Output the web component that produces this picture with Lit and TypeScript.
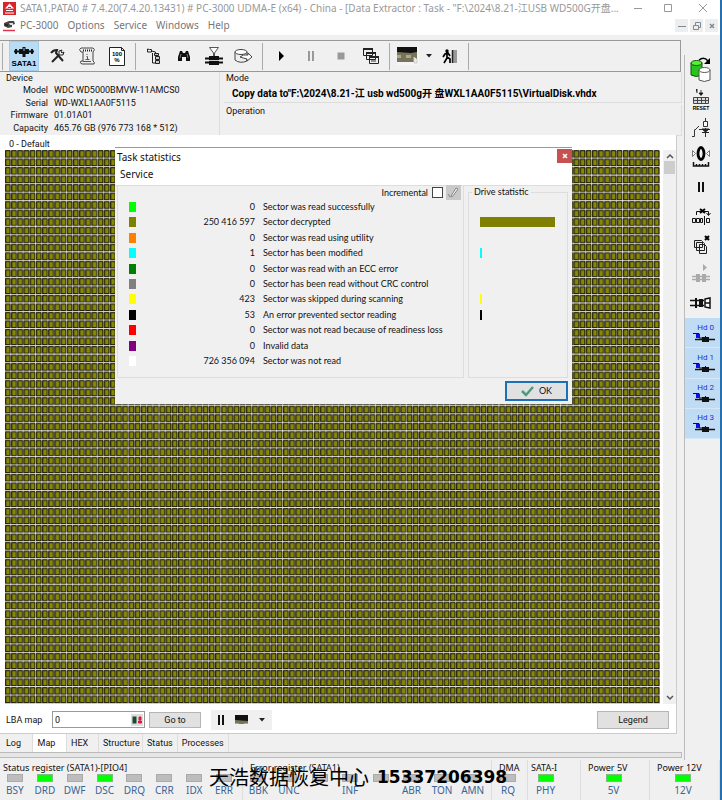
import { LitElement, html, css, svg, nothing } from "lit";
import { customElement, property } from "lit/decorators.js";
import { classMap } from "lit/directives/class-map.js";

const ICONS: Record<string, [number, number, unknown]> = {
  logo: [13, 13, svg`<rect width="13" height="13" fill="#d9252a"/><path d="M6.500 1.500 11 6.500H2z" fill="#fff"/><path d="M6.500 4v2.500M3 8.500h7M2 11h9" stroke="#fff" stroke-width="1.200"/><path d="M5 5.500h3" stroke="#d9252a"/>`],
  app: [13, 12, svg`<path d="M1 3 6 1l5 0 1 3-3 1 0 2-4 1-4-2z" fill="#444"/><path d="M6 3h4v2H7z" fill="#ddd"/><path d="M2 5h3" stroke="#111"/><path d="M0 10.500h12" stroke="#e0354a" stroke-width="1.500"/>`],
  port: [26, 24, svg`<path d="M3 7.500h20M5 5v5M21 5v5" stroke="#111" stroke-width="2"/><path d="M8 5h10v5H8z" fill="#111"/><path d="M13 3v10" stroke="#111" stroke-width="3"/><path d="M13 4v3" stroke="#9fc6ea"/><text x="13" y="21.500" text-anchor="middle" class="port">SATA1</text>`],
  tools: [16, 16, svg`<path d="M2 5q2-3 6-3l-1 3 7 8" stroke="#222" stroke-width="2" fill="none"/><path d="M3 14l7-7" stroke="#222" stroke-width="2"/><path d="M10 3v4h4l1-3-2 1-1-1 1-2z" fill="#eee" stroke="#222"/>`],
  script: [18, 20, svg`<path d="M3 2h12q3 1 0 4v9q2 1 1 3H4q-3-1-1-3h2V6H3Q0 3 3 2z" fill="#eee" stroke="#444"/><path d="M5 4.500h9" stroke="#222" stroke-width="2" stroke-dasharray="1 1"/><path d="M9 8v1M8.500 10.500h1v3M7.500 13.500h4M5 15.500h8" stroke="#555" fill="none"/>`],
  percent: [16, 20, svg`<path d="M.5 1.500h12l3 3v15H.5z" fill="#fff" stroke="#222"/><path d="M12.500 1.500v3h3" fill="none" stroke="#222"/><text x="8" y="10" text-anchor="middle" class="tiny">100</text><text x="8" y="16" text-anchor="middle" class="tiny">%</text>`],
  tree: [16, 18, svg`<path d="M1.500 2v3h4V2.500h-2zM5.500 4l4 1v3M6.500 6v10h4" fill="none" stroke="#222"/><path d="M8.500 6.500h4v2h-4zM9.500 9.500h4v3h-4zM9.500 13.500h4v3h-4z" fill="#ccc" stroke="#222"/>`],
  find: [14, 14, svg`<path d="M3 2h2l1 2h2l1-2h2l2 6v4H9V8H5v4H1V8z" fill="#111"/><path d="M4 5l-1 4M10 5l1 4" stroke="#777"/>`],
  filter: [18, 20, svg`<path d="M4.500 1.500h9L9.500 7v3h-1V7z" fill="#fff" stroke="#555"/><path d="M0 12.500h18M0 16.500h18" stroke="#111" stroke-width="2"/><path d="M4 10h10v9H4z" fill="#111"/><path d="M4 14.500h10" stroke="#ccc"/>`],
  disk: [20, 16, svg`<path d="M1 4v8q5 4 12 1V4z" fill="#eee" stroke="#444"/><ellipse cx="7" cy="4" rx="6" ry="2.500" fill="#fff" stroke="#444"/><path d="M6 9q3-3 8-2V5l4 4-5 4v-2q-4-1-7-2z" fill="#fff" stroke="#444"/>`],
  play: [8, 12, svg`<path d="M2 1 7 6 2 11z" fill="#000"/>`],
  pause: [8, 10, svg`<path d="M2 0v10M6 0v10" stroke="currentColor" stroke-width="2"/>`],
  stop: [8, 8, svg`<rect x="0.500" y="0.500" width="7" height="7" fill="#999"/>`],
  windows: [18, 18, svg`<path d="M1.500 1.500h9v7h-9zM4.500 5.500h9v7h-9zM7.500 9.500h9v7h-9z" fill="#eee" stroke="#222"/><path d="M1 2h10M4 6h10M7 10h10" stroke="#222" stroke-width="2"/><path d="M9 14h5" stroke="#333"/>`],
  photo: [22, 18, svg`<rect width="22" height="18" fill="#f5f5f5"/><rect width="20" height="15" fill="#77745a"/><path d="M0 0h20v5L14 6 0 5z" fill="#11120f"/><path d="M0 8h4v3H0zM9 8h5v3H9z" fill="#aaa98c"/><path d="M17 10v6h3v-4" stroke="#ccc" fill="#eee"/>`],
  caret: [8, 6, svg`<path d="M1 1h6L4 4.500z" fill="#222"/>`],
  exit: [16, 16, svg`<circle cx="5" cy="3" r="1.700" fill="#000"/><path d="M5 4v6l-3 5M5 9l3 2 0 4M1 9l2-3 3-1 2 3" stroke="#000" stroke-width="1.700" fill="none"/><path d="M11 2h4v13h-4z" fill="#999"/><path d="M10.500 2v13" stroke="#222" stroke-width="1.500"/>`],
  copyDisk: [24, 28, svg`<path d="M2 7v12q5 3 11 0V7z" fill="#26c51a" stroke="#174d10"/><ellipse cx="7.500" cy="7" rx="5.500" ry="2.500" fill="#58f037" stroke="#174d10"/><path d="M10 14v10q5 3 11 0V14z" fill="#fff" stroke="#555"/><ellipse cx="15.500" cy="14" rx="5.500" ry="2.500" fill="#fff" stroke="#555"/><path d="M10 4q5-4 9 1" fill="none" stroke="#000" stroke-width="1.500"/><path d="M21 2v6h-6z" fill="#000"/>`],
  reset: [20, 24, svg`<path d="M5 3l1-1v4M10 3v4M8 6h4l-2 2.500z" fill="#111" stroke="#111" stroke-width=".8"/><path d="M2.500 10.500h15v6h-15zM6.500 10v7M10.500 10v7M14.500 10v7M2 13.500h16" fill="#ddd" stroke="#444"/><text x="10" y="23" text-anchor="middle" class="micro">RESET</text>`],
  switch: [20, 20, svg`<path d="M1 18.500h2.500v-7M4 12l4-4M8 11.500h11M14.500 0v5M14.500 10v9" fill="none" stroke="#333"/><path d="M12.500 3.500h4v5h-4z" fill="#fff" stroke="#333"/><path d="M11 11h7l-3.500 3zM11 14.500h7" fill="#222" stroke="#222"/>`],
  gauge: [20, 22, svg`<ellipse cx="10" cy="7.500" rx="3" ry="6" fill="none" stroke="#000" stroke-width="2.800"/><path d="M1.500 4.500v6l3-3zM18.500 4.500v6l-3-3z" fill="#fff" stroke="#777"/><path d="M2.500 16v4h15v-4M5.500 18v2M8.500 18v2M11.500 18v2M14.500 18v2" fill="none" stroke="#111" stroke-width="1.500"/>`],
  skip: [20, 18, svg`<path d="M1.500 11.500h3v4h-3zM5.500 11.500h3v4h-3zM9.500 11.500h2v4h-2zM13.500 9v9M15.500 11.500h3v4h-3z" fill="#eee" stroke="#111"/><path d="M5.500 8V4.500h12V8M15.500 6l2 2.500 2-2.500" fill="none" stroke="#111"/><path d="M9 2l5 4M14 2 9 6" stroke="#000" stroke-width="2"/>`],
  pages: [20, 20, svg`<path d="M3.500 5.500h7l1 1v6h-8zM5.500 7.500h7l1 1v7h-8zM8.500 9.500h5l2 2v7h-7z" fill="#eee" stroke="#222"/><path d="M14 1l4 4M18 1l-4 4" stroke="#000" stroke-width="2"/>`],
  ghost: [20, 20, svg`<path d="M12 0v7l4-3.500z" fill="#aaa"/><path d="M1 12.500h18M1 15.500h18" stroke="#aaa" stroke-width="1.500"/><path d="M5 10h4v8H5zM11 10h4v8h-4z" fill="#aaa"/>`],
  plug: [22, 12, svg`<path d="M0 3.500h14M0 8.500h14" stroke="#111" stroke-width="1.500"/><path d="M5 1h2v10H5zM9 2h4v8H9z" fill="#111"/><path d="M15 2l5-1v10l-5-1zM15 6h5" fill="#fff" stroke="#111" stroke-width="1.500"/>`],
  head: [22, 10, svg`<path d="M0 .5h6V5h3" fill="none" stroke="#111"/><path d="M3 1h4v4H3z" fill="#1010e0"/><path d="M2 6.500h20" stroke="#111" stroke-width="1.500"/><path d="M9 4h3v-1h1v1h3v5H9z" fill="#111"/>`],
  pencil: [15, 15, svg`<rect width="15" height="15" fill="#c9c9c9"/><path d="M5 11l5-8 2 1-5 7-2 1zM2 9l2 3" stroke="#888" fill="#eee"/>`],
  check: [14, 12, svg`<path d="M1 6l4 4 7-8" fill="none" stroke="#4a9c7c" stroke-width="2.500"/>`],
  up: [8, 8, svg`<path d="M1 6l3-3 3 3" fill="none" stroke="#555" stroke-width="1.500"/>`],
  down: [8, 8, svg`<path d="M1 2l3 3 3-3" fill="none" stroke="#555" stroke-width="1.500"/>`],
  min: [10, 10, svg`<path d="M1 5.500h8" stroke="currentColor"/>`],
  max: [10, 10, svg`<path d="M1.500 1.500h7v7h-7z" fill="none" stroke="currentColor"/>`],
  restore: [10, 10, svg`<path d="M1.500 4.500h5v4h-5zM3.500 4V1.500h5v5H7" fill="none" stroke="currentColor"/>`],
  close: [10, 10, svg`<path d="M1 1l8 8M9 1 1 9" stroke="currentColor"/>`],
  closeBold: [8, 8, svg`<path d="M2 2l4 4M6 2 2 6" stroke="currentColor" stroke-width="1.500"/>`],
  hex: [12, 12, svg`<rect width="12" height="12" fill="#ddd"/><path d="M2.500 3.500h2v5h-2z" fill="none" stroke="#174a35" stroke-width="2"/><path d="M8 3h2v3H8zM7.500 7h3v2h-3z" fill="#e01840" stroke="#e01840"/>`],
};

@customElement("ui-icon")
class UiIcon extends LitElement {
  static styles = css`
    :host { display: inline-flex; flex: none; }
    svg { display: block; overflow: visible; }
    .port { font: bold 8px "Liberation Sans", sans-serif; }
    .tiny { font: bold 6px "Liberation Sans", sans-serif; }
    .micro { font: bold 5px "Liberation Sans", sans-serif; }
  `;
  @property() name = "";
  render() {
    const [w, h, body] = ICONS[this.name];
    return html`<svg width=${w} height=${h} viewBox="0 0 ${w} ${h}" aria-hidden="true">${body}</svg>`;
  }
}

@customElement("sector-map")
class SectorMap extends LitElement {
  static styles = css`
    :host { display: block; min-height: 0; }
    svg { display: block; width: 100%; height: 100%; }
  `;
  render() {
    return html`<svg viewBox="0 0 848 715" preserveAspectRatio="none" role="img" aria-label="Sector map">
      <defs>
        <pattern id="cell" width="8" height="11" patternUnits="userSpaceOnUse">
          <rect width="8" height="11" fill="#d8d4d4"></rect>
          <rect y="1" width="8" height="8.600" fill="#8c8480"></rect>
          <rect x="0.200" y="0.200" width="6.800" height="9.600" fill="#141400"></rect>
          <rect x="1.500" y="1.500" width="4.600" height="7.200" fill="#868806"></rect>
        </pattern>
        <pattern id="block" width="40" height="33" patternUnits="userSpaceOnUse">
          <path d="M39.500 0v33M0 32.300h40" stroke="#fff" stroke-opacity="0.400" fill="none"></path>
        </pattern>
      </defs>
      <rect width="848" height="715" fill="url(#cell)"></rect>
      <rect width="848" height="715" fill="url(#block)"></rect>
    </svg>`;
  }
}

const STATS = [
  ["#00ff00", "0", "Sector was read successfully", 0],
  ["#808000", "250 416 597", "Sector decrypted", 100],
  ["#ff8000", "0", "Sector was read using utility", 0],
  ["#00ffff", "1", "Sector has been modified", 3],
  ["#008000", "0", "Sector was read with an ECC error", 0],
  ["#808080", "0", "Sector has been read without CRC control", 0],
  ["#ffff00", "423", "Sector was skipped during scanning", 3],
  ["#000000", "53", "An error prevented sector reading", 3],
  ["#ff0000", "0", "Sector was not read because of readiness loss", 0],
  ["#800080", "0", "Invalid data", 0],
  ["#ffffff", "726 356 094", "Sector was not read", 0],
] as const;

@customElement("task-dialog")
class TaskDialog extends LitElement {
  static styles = css`
    :host { display: block; width: 457px; background: #f0f0f0; border-top: 1px solid #999; box-sizing: border-box; color: #111; font: 9px/12px Lato, sans-serif; }
    .title { display: flex; justify-content: space-between; height: 18px; background: #fff; font: 10px/18px "Noto Sans", sans-serif; padding-left: 2px; }
    .x { width: 15px; height: 14px; margin-top: 1px; padding: 0; border: 0; background: #c75050; color: #fff; display: grid; place-items: center; }
    .menu { background: #fff; height: 20px; border-bottom: 1px solid #ddd; box-sizing: border-box; }
    .menu button { border: 0; background: none; padding: 0 5px; font: 10px/16px "Noto Sans", sans-serif; color: #111; }
    .panels { display: grid; grid-template-columns: 1fr 100px; gap: 4px; padding: 0 4px 0 2px; }
    .left { border: 1px solid #ddd; border-top: 0; padding-bottom: 8px; }
    .inc { display: flex; justify-content: flex-end; align-items: center; gap: 3px; height: 13px; padding: 0 2px 0 0; }
    .inc label { display: flex; align-items: center; gap: 4px; }
    .inc input { appearance: none; width: 11px; height: 11px; margin: 0; border: 1px solid #444; background: #fff; }
    .inc button { border: 0; padding: 0; background: none; display: flex; }
    table { width: 100%; height: 170px; border-collapse: collapse; }
    td { padding: 0; }
    .c1 { width: 33px; padding-left: 11px; }
    .sw { width: 7px; height: 10px; }
    .num { width: 93px; text-align: right; }
    .txt { padding-left: 8px; }
    fieldset { margin: 0; min-width: 0; border: 1px solid #ddd; padding: 0 12px 8px 11px; display: flex; flex-direction: column; justify-content: flex-end; }
    legend { margin-left: -8px; padding: 0 2px; line-height: 12px; }
    .bars { height: 170px; display: grid; grid-auto-rows: 1fr; align-items: center; }
    .bar { height: 10px; }
    .foot { display: flex; justify-content: flex-end; padding: 3px 4px; }
    .ok { width: 63px; height: 20px; border: 2px solid #1c70b8; background: #e1e1e1; padding: 0; display: flex; align-items: center; justify-content: center; gap: 4px; font: inherit; color: #111; }
  `;
  render() {
    return html`
      <div class="title"><span>Task statistics</span><button class="x" aria-label="Close"><ui-icon name="closeBold"></ui-icon></button></div>
      <div class="menu"><button>Service</button></div>
      <div class="panels">
        <div class="left">
          <div class="inc"><label>Incremental <input type="checkbox"></label><button aria-label="Edit"><ui-icon name="pencil"></ui-icon></button></div>
          <table><tbody>
            ${STATS.map(([color, n, label]) => html`<tr><td class="c1"><div class="sw" style="background:${color}"></div></td><td class="num">${n}</td><td class="txt">${label}</td></tr>`)}
          </tbody></table>
        </div>
        <fieldset><legend>Drive statistic</legend>
          <div class="bars">${STATS.map(([color, , , w]) => html`<div class="bar" style="width:${w}%;background:${color}"></div>`)}</div>
        </fieldset>
      </div>
      <div class="foot"><button class="ok"><ui-icon name="check"></ui-icon>OK</button></div>
    `;
  }
}

const TOOLS = [
  ["tools", "script", "percent"],
  ["tree", "find", "filter", "disk"],
  ["play", "pause", "stop", "windows"],
];
const DEVICE = [["Model", "WDC WD5000BMVW-11AMCS0"], ["Serial", "WD-WXL1AA0F5115"], ["Firmware", "01.01A01"], ["Capacity", "465.76 GB (976 773 168 * 512)"]];
const SIDE = ["copyDisk", "reset", "switch", "gauge", "pause", "skip", "pages", "ghost", "plug"];
const REGISTERS: [string, string, string[], string[]][] = [
  ["state", "Status register (SATA1)-[PIO4]", ["BSY", "DRD", "DWF", "DSC", "DRQ", "CRR", "IDX", "ERR"], ["DRD", "DSC"]],
  ["error", "Error register (SATA1)", ["BBK", "UNC", "", "INF", "", "ABR", "TON", "AMN"], []],
  ["dma", "DMA", ["RQ"], []],
  ["sata", "SATA-I", ["PHY"], ["PHY"]],
  ["p5", "Power 5V", ["5V"], ["5V"]],
  ["p12", "Power 12V", ["12V"], ["12V"]],
];

@customElement("app-root")
class AppRoot extends LitElement {
  static styles = css`
    :host { display: flex; flex-direction: column; min-height: 100vh; box-sizing: border-box; border-right: 2px solid #2470b0; background: #f0f0f0; color: #111; font: 9px/12px Roboto, "Noto Sans CJK SC", sans-serif; position: relative; }
    button { font: inherit; color: inherit; padding: 0; border: 0; background: none; }
    .titlebar { display: flex; align-items: center; height: 16px; background: #fff; color: #999; font: 10px/16px "Noto Sans", "Noto Sans CJK SC", sans-serif; padding-left: 3px; gap: 4px; white-space: nowrap; }
    .name { flex: 1; }
    .win { display: flex; }
    .win button { width: 35px; display: grid; place-items: center; }
    .win button:first-child { width: 25px; }
    .menubar { display: flex; align-items: center; height: 19px; background: #fff; color: #777; font: 10px/19px "Noto Sans", sans-serif; padding-left: 3px; }
    .menus { display: flex; flex: 1; gap: 9px; padding-left: 4px; }
    .mdi { display: flex; gap: 2px; padding-right: 2px; color: #7b8a99; }
    .mdi button { width: 13px; height: 13px; background: #eee; display: grid; place-items: center; }
    .body { flex: 1; display: grid; grid-template-columns: minmax(0, 1fr) 36px; }
    .main { display: flex; flex-direction: column; padding: 5px 3px 0 0; min-width: 0; }
    .side { border-left: 1px solid #bbb; margin-top: 20px; }
    .sidelist { display: flex; flex-direction: column; height: 384px; }
    .sidelist button { flex: 1; min-height: 0; display: flex; flex-direction: column; align-items: center; justify-content: center; padding-right: 3px; }
    .sidelist .hd { background: #bfdcf4; border-bottom: 1px solid #d5e8f8; color: #1a2fe0; padding-left: 3px; padding-right: 0; font-size: 8px; line-height: 10px; }
    .hd span { align-self: flex-end; padding-right: 6px; }
    .toolbar { display: flex; align-items: center; height: 32px; box-sizing: border-box; border: 1px solid #999; border-left: 0; padding-left: 2px; gap: 3px; }
    .sep { width: 1px; height: 27px; background: #aaa; }
    .set { display: flex; }
    .tool { width: 30px; height: 30px; display: grid; place-items: center; }
    .sel { background: #b9dcf5; margin: 0 0 0 3px; outline: 1px solid #a5cdec; outline-offset: -1px; }
    .off { color: #999; }
    .arrow { width: 12px; }
    .info { display: grid; grid-template-columns: 220px minmax(0, 1fr); gap: 4px; height: 62px; margin-right: -1px; }
    .group { border-right: 1px solid #ddd; border-bottom: 1px solid #ddd; box-sizing: border-box; padding-left: 6px; }
    .stack { display: grid; grid-template-rows: 1fr 1fr; gap: 2px; }
    .stack .group { padding-left: 2px; }
    .group h2 { margin: 0; font: inherit; }
    dl { display: grid; grid-template-columns: 42px 1fr; grid-auto-rows: 1fr; height: 50px; gap: 0 6px; margin: 0; }
    dt { text-align: right; }
    dd { margin: 0; }
    .mode { font: bold 10px/16px Roboto, "Noto Sans CJK SC", sans-serif; margin: 0; padding: 2px 0 0 6px; white-space: nowrap; color: #000; }
    .map { flex: 1; display: flex; flex-direction: column; background: #fff; margin-top: 1px; margin-right: 4px; border-right: 1px solid #ccc; border-bottom: 1px solid #ccc; position: relative; }
    .area { flex: 1; display: grid; grid-template-columns: minmax(0, 1fr) 13px; gap: 3px; padding-left: 5px; }
    .cap { padding: 3px 0 0 9px; height: 12px; }
    .scroll { background: #f0f0f0; display: flex; flex-direction: column; align-items: center; gap: 1px; padding: 2px 0; }
    .thumb { width: 11px; height: 13px; background: #cdcdcd; }
    .fill { flex: 1; }
    .controls { display: flex; align-items: center; height: 27px; padding: 2px 7px 0 6px; gap: 4px; }
    .lba { display: flex; align-items: center; width: 139px; justify-content: space-between; }
    .field { display: flex; align-items: center; width: 93px; height: 17px; box-sizing: border-box; border: 1px solid #999; background: #fff; padding-right: 1px; }
    .field input { flex: 1; min-width: 0; border: 0; padding: 0 2px; font: inherit; color: inherit; background: none; outline: none; }
    .btn { border: 1px solid #b5b5b5; background: #e1e1e1; height: 16px; width: 52px; }
    .wide { width: 72px; height: 18px; margin-left: auto; }
    .mini { display: flex; align-items: center; gap: 10px; background: #f0f0f0; height: 20px; padding: 0 6px; margin-left: 6px; }
    .mini button { display: flex; }
    .mini .pic { width: 13px; height: 9px; overflow: hidden; }
    .tabs { display: flex; height: 18px; }
    .tab { padding: 0 4px; border-right: 1px solid #ddd; }
    .w1 { width: 33px; text-align: left; padding-left: 6px; }
    .w2 { width: 34px; background: #fff; padding: 0 10px 0 4px; }
    .w3 { width: 32px; text-align: left; }
    .w4 { width: 44px; }
    .split { height: 4px; border: 1px solid #bbb; border-left: 0; background: #e6e6e6; margin-bottom: 2px; margin-right: -1px; }
    .status { display: grid; grid-template-columns: 243fr 249fr 36fr 53fr 69fr 70fr; font: 9px/12px "Noto Sans", sans-serif; height: 40px; }
    .reg { border-right: 1px solid #ddd; min-width: 0; padding-top: 2px; box-sizing: border-box; }
    .reg h2 { margin: 0; font: inherit; padding-left: 3px; white-space: nowrap; }
    .error h2, .dma h2, .p5 h2, .p12 h2 { padding-left: 7px; }
    .leds { display: grid; grid-auto-flow: column; grid-auto-columns: 1fr; padding-right: 3px; }
    .sata .leds { padding-right: 17px; }
    .led { display: flex; flex-direction: column; align-items: center; color: #3a6595; gap: 2px; font-size: 10px; }
    .lamp { width: 16px; height: 8px; box-sizing: border-box; border: 1px solid #aaa; background: #bdbdbd; }
    .on { background: #00ff00; border-color: #7ac07a; }
    .dialog { position: absolute; left: 115px; top: 12px; }
    .mark { position: absolute; left: 209px; bottom: 11px; display: flex; align-items: center; gap: 8px; margin: 0; color: #000; font: 20px/24px "Noto Sans CJK SC", sans-serif; white-space: nowrap; }
    .mark b { font: bold 17px/24px "DejaVu Sans", sans-serif; }
  `;

  private tool(name: string) {
    return html`<button class=${classMap({ tool: true, off: name === "pause" })} aria-label=${name}><ui-icon name=${name}></ui-icon></button>`;
  }

  render() {
    return html`
      <header>
        <div class="titlebar"><ui-icon name="logo"></ui-icon><span class="name">SATA1,PATA0 # 7.4.20(7.4.20.13431) # PC-3000 UDMA-E (x64) - China - [Data Extractor : Task - "F:\\2024\\8.21-江USB WD500G开盘...</span>
          <div class="win">${["min", "max", "close"].map((n) => html`<button aria-label=${n}><ui-icon name=${n}></ui-icon></button>`)}</div></div>
        <div class="menubar"><ui-icon name="app"></ui-icon>
          <nav class="menus">${["PC-3000", "Options", "Service", "Windows", "Help"].map((m) => html`<button>${m}</button>`)}</nav>
          <div class="mdi">${["min", "restore", "closeBold"].map((n) => html`<button aria-label="Child ${n}"><ui-icon name=${n}></ui-icon></button>`)}</div></div>
      </header>
      <div class="body">
        <main class="main">
          <div class="toolbar">
            <i class="sep"></i>
            <button class="tool sel" aria-label="SATA1"><ui-icon name="port"></ui-icon></button>
            ${TOOLS.map((set) => html`<div class="set">${set.map((n) => this.tool(n))}</div><i class="sep"></i>`)}
            <div class="set">${this.tool("photo")}<button class="tool arrow" aria-label="More"><ui-icon name="caret"></ui-icon></button>${this.tool("exit")}</div><i class="sep"></i>
          </div>
          <div class="info">
            <section class="group"><h2>Device</h2><dl>${DEVICE.map(([k, v]) => html`<dt>${k}</dt><dd>${v}</dd>`)}</dl></section>
            <div class="stack">
              <section class="group"><h2>Mode</h2><p class="mode">Copy data to"F:\\2024\\8.21-江 usb wd500g开 盘WXL1AA0F5115\\VirtualDisk.vhdx</p></section>
              <section class="group"><h2>Operation</h2></section>
            </div>
          </div>
          <section class="map">
            <div class="cap">0 - Default</div>
            <div class="area"><sector-map></sector-map>
              <div class="scroll"><ui-icon name="up"></ui-icon><div class="thumb"></div><div class="fill"></div><ui-icon name="down"></ui-icon></div></div>
            <div class="controls">
              <div class="lba"><label for="lba">LBA map</label><div class="field"><input id="lba" type="text" value="0"><ui-icon name="hex"></ui-icon></div></div>
              <button class="btn">Go to</button>
              <div class="mini"><button aria-label="Pause"><ui-icon name="pause"></ui-icon></button><button class="pic" aria-label="View"><ui-icon name="photo"></ui-icon></button><button aria-label="More"><ui-icon name="caret"></ui-icon></button></div>
              <button class="btn wide">Legend</button>
            </div>
            <task-dialog class="dialog"></task-dialog>
          </section>
          <nav class="tabs">${["Log", "Map", "HEX", "Structure", "Status", "Processes"].map((t, i) => html`<button class="tab w${i + 1}">${t}</button>`)}</nav>
          <div class="split"></div>
        </main>
        <aside class="side"><div class="sidelist">
          ${SIDE.map((n) => html`<button aria-label=${n}><ui-icon name=${n}></ui-icon></button>`)}
          ${[0, 1, 2, 3].map((n) => html`<button class="hd"><span>Hd ${n}</span><ui-icon name="head"></ui-icon></button>`)}
        </div></aside>
      </div>
      <footer class="status">
        ${REGISTERS.map(([id, title, bits, on]) => html`<section class="reg ${id}"><h2>${title}</h2><div class="leds">
          ${bits.map((b) => html`<div class="led"><i class=${classMap({ lamp: true, on: on.includes(b) })}></i>${b ? html`<span>${b}</span>` : nothing}</div>`)}</div></section>`)}
      </footer>
      <p class="mark"><span>天浩数据恢复中心</span><b>15337206398</b></p>
    `;
  }
}
